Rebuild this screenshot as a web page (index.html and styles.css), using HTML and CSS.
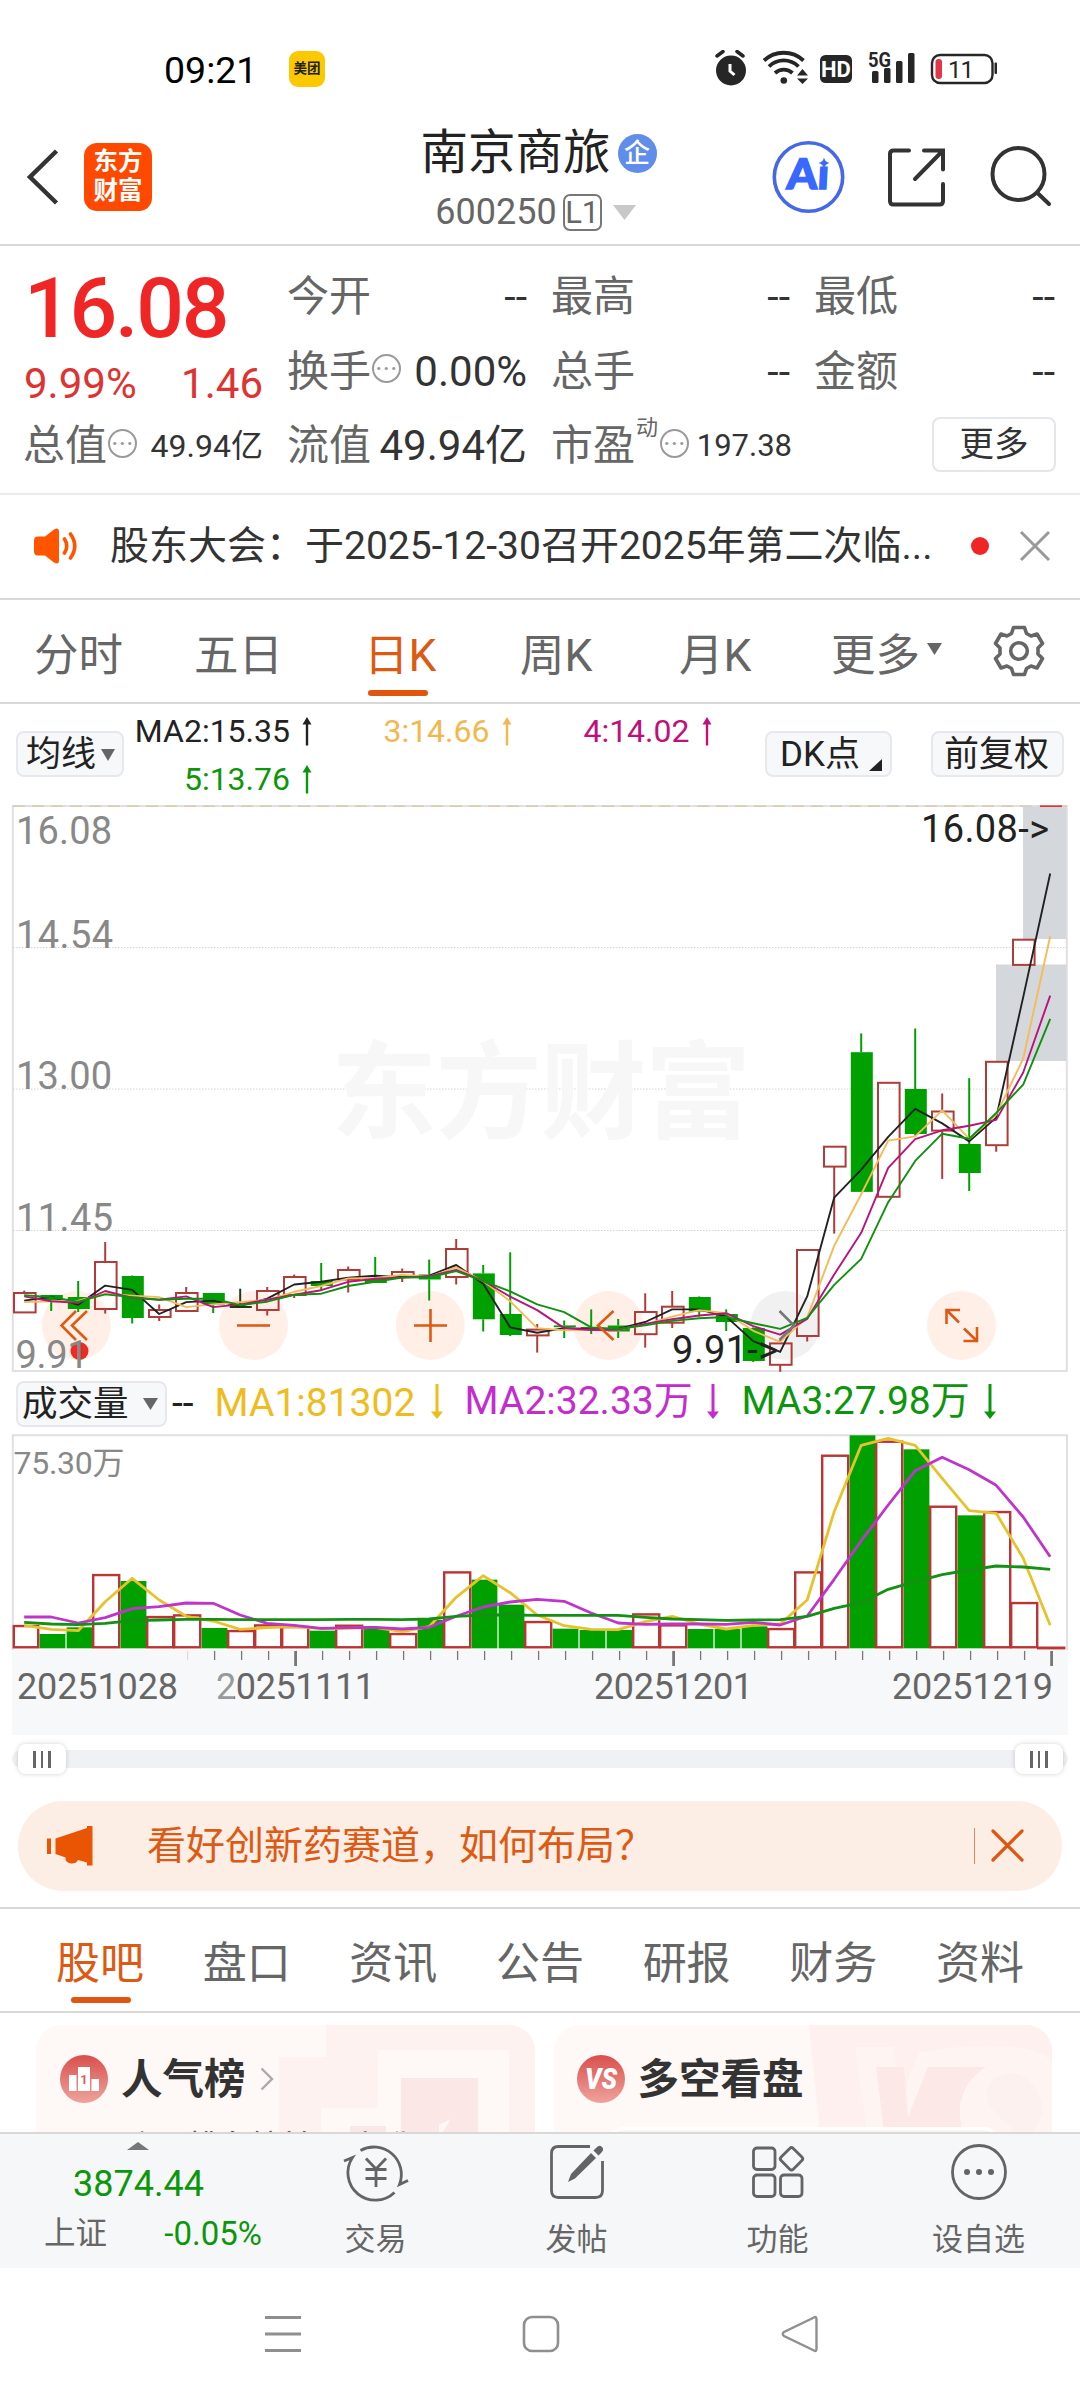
FILE: index.html
```html
<!DOCTYPE html>
<html lang="zh-CN">
<head>
<meta charset="utf-8">
<title>南京商旅 600250</title>
<link rel="stylesheet" href="styles.css">
</head>
<body>
<div class="screen">

  <div class="status">
    <span class="clock">09:21</span>
    <span class="mt">美团</span>
    <svg class="status-icons" width="300" height="40" viewBox="0 0 300 40">
      <g fill="#262626">
        <circle cx="16" cy="20.500" r="15"/>
        <path d="M3 6.500L9 2M29 6.500L23 2" transform="translate(-1,-.5)" stroke="#262626" stroke-width="3.500" stroke-linecap="round"/>
        <path d="M15 14v7l4.500 4" fill="none" stroke="#fff" stroke-width="3"/>
        <g fill="none" stroke="#262626" stroke-width="3.800">
          <path d="M49 10.500a29 29 0 0 1 39.500 0"/>
          <path d="M54 16.500a21 21 0 0 1 29.500 0"/>
          <path d="M60 23a13 13 0 0 1 17.500 0"/>
        </g>
        <circle cx="68.800" cy="30.500" r="3.300"/>
        <path d="M82 25.500l5.500-6.500 5.500 6.500zM82 28.500l5.500 5.500 5.500-5.500z"/>
        <rect x="105" y="5" width="32" height="28" rx="5.500"/>
        <rect x="157" y="21" width="6.500" height="12" rx="1.500"/>
        <rect x="169" y="18" width="6.500" height="15" rx="1.500"/>
        <rect x="181" y="11" width="6.500" height="22" rx="1.500"/>
        <rect x="193" y="3" width="6.500" height="30" rx="1.500"/>
        <rect x="279.500" y="12.500" width="2.500" height="11.500" rx="1"/>
      </g>
      <rect x="217" y="5" width="60.500" height="28" rx="8" fill="none" stroke="#262626" stroke-width="2.400"/>
      <rect x="220.500" y="9" width="6.500" height="20" rx="3" fill="#e4344a"/>
      <text x="121" y="27" class="s-hd">HD</text>
      <text x="153" y="16.500" class="s-5g" textLength="23" lengthAdjust="spacingAndGlyphs">5G</text>
      <text x="233" y="28" class="s-batt" textLength="26">11</text>
    </svg>
  </div>

  <header class="header">
    <svg class="back" width="36" height="60" viewBox="0 0 36 60"><path d="M31.500 4L5 30l26.500 26" fill="none" stroke="#333" stroke-width="4.500"/></svg>
    <div class="logo"><span>东方</span><span>财富</span></div>
    <div class="title">
      <div class="name">南京商旅<span class="badge">企</span></div>
      <div class="code">600250<span class="lv">L1</span><svg width="24" height="15" viewBox="0 0 24 15"><path d="M0 0h23L11.500 15z" fill="#c8c8c8"/></svg></div>
    </div>
    <svg class="head-icons" width="290" height="76" viewBox="0 0 290 76">
      <circle cx="38.500" cy="38" r="34.200" fill="none" stroke="#4468e8" stroke-width="3.600"/>
      <text x="19" y="50.500" class="ai" textLength="42" lengthAdjust="spacingAndGlyphs" transform="skewX(-3)">Aı</text>
      <path d="M54 18.500q1 4.500 5.500 5.500-4.500 1-5.500 5.500-1-4.500-5.500-5.500 4.500-1 5.500-5.500z" fill="#3968ff"/>
      <g fill="none" stroke="#333" stroke-width="4" stroke-linecap="round">
        <path d="M139 11.500h-15.500q-3.500 0-3.500 3.500v47q0 3.500 3.500 3.500h46q3.500 0 3.500-3.500v-17M154 11.500h19v19M173 11.500L145 40"/>
        <circle cx="248.500" cy="35" r="26"/>
        <path d="M267.500 54L279 65"/>
      </g>
    </svg>
  </header>

  <section class="quote">
    <div class="price-box">
      <div class="price">16.08</div>
      <div class="chg"><span>9.99%</span><span>1.46</span></div>
    </div>
    <div class="cell"><span class="k">今开</span><b>--</b></div>
    <div class="cell"><span class="k">最高</span><b>--</b></div>
    <div class="cell"><span class="k">最低</span><b>--</b></div>
    <div class="cell"><span class="k">换手<i class="dots">···</i></span><b class="lg">0.00%</b></div>
    <div class="cell"><span class="k">总手</span><b>--</b></div>
    <div class="cell"><span class="k">金额</span><b>--</b></div>
    <div class="cell"><span class="k">总值<i class="dots">···</i></span><b class="sm">49.94亿</b></div>
    <div class="cell"><span class="k">流值</span><b class="lg">49.94亿</b></div>
    <div class="cell"><span class="k">市盈<sup>动</sup><i class="dots">···</i></span><b class="xs">197.38</b></div>
    <div class="cell end"><span class="more">更多</span></div>
  </section>

  <section class="news">
    <svg width="48" height="40" viewBox="0 0 48 40"><path d="M5 10.500h7L21 3.500q5-3 5 2.500v28q0 5.500-5 2.500L12 29.500H5q-4 0-4-4v-11q0-4 4-4z" fill="#ff5500"/><path d="M31.500 13q4.500 7 0 14M37.500 8q8.500 12 0 24" fill="none" stroke="#ff5500" stroke-width="3.600" stroke-linecap="round"/></svg>
    <span class="news-text">股东大会：于2025-12-30召开2025年第二次临...</span>
    <span class="dot"></span>
    <svg width="32" height="32" viewBox="0 0 32 32"><path d="M2 2l28 28M30 2L2 30" stroke="#999" stroke-width="3"/></svg>
  </section>

  <nav class="periods">
    <span>分时</span><span>五日</span><span class="on">日K</span><span>周K</span><span>月K</span><span>更多<svg width="15" height="12" viewBox="0 0 15 12"><path d="M0 0h15L7.500 12z" fill="#666"/></svg></span>
    <svg class="gear" width="52" height="52" viewBox="-26 -26 52 52"><g fill="none" stroke="#666" stroke-width="3.600" stroke-linejoin="round"><circle r="8.300"/><path d="M-5.500-23.500H5.500L7.500-17.500 12-15 18-17 23.500-7.500 19-3V3L23.500 7.500 18 17 12 15 7.500 17.500 5.500 23.500H-5.500L-7.500 17.500-12 15-18 17-23.500 7.500-19 3V-3L-23.500-7.500-18-17-12-15-7.500-17.500z"/></g></svg>
  </nav>

  <section class="ma">
    <span class="btn b1">均线<svg width="14" height="12" viewBox="0 0 14 12"><path d="M0 0h14L7 12z" fill="#666"/></svg></span>
    <div class="ma-list">
      <span class="m2">MA2:15.35<svg class="up" width="12" height="29"><use href="#up"/></svg></span>
      <span class="m3">3:14.66<svg class="up" width="12" height="29"><use href="#up"/></svg></span>
      <span class="m4">4:14.02<svg class="up" width="12" height="29"><use href="#up"/></svg></span>
      <span class="m5">5:13.76<svg class="up" width="12" height="29"><use href="#up"/></svg></span>
    </div>
    <span class="btn b2">DK点<svg width="13" height="12" viewBox="0 0 13 12"><path d="M13 0v12H0z" fill="#222"/></svg></span>
    <span class="btn b3">前复权</span>
  </section>

  <svg class="kline" id="kline" width="1080" height="575" viewBox="0 0 1080 575">
    <rect x="12.800" y="6" width="1054" height="565" fill="none" stroke="#e0e0e0" stroke-width="2"/>
    <path d="M13 6.200H1067" stroke="#d8c4a4" stroke-width="1.200" stroke-dasharray="12 7"/>
    <path d="M13 147.500H1067M13 289H1067M13 430.500H1067" stroke="#d4d4d4" stroke-width="1" stroke-dasharray="1.500 1.500"/>
    <text class="watermark" x="331" y="330" textLength="420">东方财富</text>
    <g fill="#d4d8dd"><path d="M1023 6.500h43.500V139H1023zM996 164.500h70.500V261H996z"/></g>
    <path d="M1040 6.200h22" stroke="#e03030" stroke-width="1.600"/>
    <g fill="#ffefe7">
      <circle cx="76.400" cy="525.500" r="34.500"/><circle cx="253.500" cy="525.500" r="34.500"/><circle cx="430.400" cy="525.500" r="34.500"/>
      <circle cx="608.500" cy="525.500" r="34.500"/><circle cx="785" cy="525.500" r="34.500" fill="#f1f1f1"/><circle cx="961.500" cy="525.500" r="34.500"/>
    </g>
    <circle cx="79.500" cy="551" r="9" fill="#ee2a22"/>
    <g class="axis">
      <text x="16" y="44" textLength="96">16.08</text><text x="16" y="148" textLength="97">14.54</text>
      <text x="16" y="289" textLength="96">13.00</text><text x="16" y="431" textLength="97">11.45</text>
      <text x="15.500" y="567.500" textLength="73">9.91</text>
    </g>
    <g id="candles"></g>
    <g id="averages"></g>
    <g class="mark"><text x="921" y="41.700" textLength="128">16.08-&gt;</text><text x="672" y="562.500" textLength="106">9.91-&gt;</text></g>
    <g fill="none" stroke="#dc5a14" stroke-width="2.600">
      <path d="M76 511L61.500 525.500 76 540M87 511L72 525.500 87 540M237 525.500h33M414 525.500h33M430.500 509v33M613.500 511L598 525.500 613.500 540"/>
      <path d="M960 510H946.500V524M946.500 510l12.500 12.500M963.500 541h13.500V527M977 541L964 528.500"/>
      <path d="M779.500 511L794 525.500 779.500 540" stroke="#777"/>
    </g>
  </svg>

  <section class="vol-head">
    <span class="btn b4">成交量<svg width="15" height="12" viewBox="0 0 15 12"><path d="M0 0h15L7.500 12z" fill="#666"/></svg></span>
    <span class="dash">--</span>
    <span class="v1">MA1:81302<svg class="dn" width="12" height="35"><use href="#down"/></svg></span>
    <span class="v2">MA2:32.33万<svg class="dn" width="12" height="35"><use href="#down"/></svg></span>
    <span class="v3">MA3:27.98万<svg class="dn" width="12" height="35"><use href="#down"/></svg></span>
  </section>

  <svg class="volume" width="1080" height="304" viewBox="0 0 1080 304">
    <path d="M12.800 217V2.200H1067V217" fill="none" stroke="#e0e0e0" stroke-width="2"/>
    <rect x="12" y="217" width="1056" height="85" fill="#f7f8fa"/>
    <text x="13.500" y="41" class="vmax" textLength="111">75.30万</text>
    <g id="bars"></g>
    <g id="vol-averages"></g>
    <g id="ticks"></g>
    <g class="dates">
      <text x="17" y="265.500" textLength="161">20251028</text><text x="216" y="265.500" textLength="159">20251111</text>
      <text x="594" y="265.500" textLength="159">20251201</text><text x="892" y="265.500" textLength="161">20251219</text>
    </g>
    <rect x="212" y="236" width="22" height="32" fill="#f7f8fa" opacity=".35"/>
  </svg>

  <div class="slider"><div class="track"><span class="thumb"><i></i><i></i><i></i></span><span class="thumb"><i></i><i></i><i></i></span></div></div>

  <div class="promo-wrap">
    <div class="promo">
      <svg width="46" height="40" viewBox="0 0 46 40"><path d="M0 12.500h4V28H0zM8.500 12.500L40 2V0h5.500v39.500H40v-3l-9-2.500q-2 4-7 3.500-6-1-5.500-6L8.500 28z" fill="#ea5504"/></svg>
      <span class="promo-text">看好创新药赛道，如何布局？</span>
      <span class="bar"></span>
      <svg width="34" height="34" viewBox="0 0 34 34"><path d="M2 2l29 29M31 2L2 31" stroke="#e0560f" stroke-width="3.200" stroke-linecap="round"/></svg>
    </div>
  </div>

  <nav class="tabs"><span class="on">股吧</span><span>盘口</span><span>资讯</span><span>公告</span><span>研报</span><span>财务</span><span>资料</span></nav>

  <section class="cards">
    <div class="card">
      <svg class="deco" width="499" height="107" viewBox="0 0 499 107"><path d="M290 0h209v107H473V25H342V83H285V107H243V32h47z" fill="#fdf0ee" opacity=".7"/><path d="M365 53h77v54h-35l8-13-12 6v7h-38zM314 101h36v6h-36z" fill="#fbe7e5"/></svg>
      <svg class="ico" width="48" height="48" viewBox="0 0 48 48"><circle cx="24" cy="24" r="24" fill="url(#red)"/><path d="M9 20h7.500v16H9zM18 12h12v24H18zM31.500 24H39v12h-7.500z" fill="#fff"/><text x="24" y="29" class="one">1</text></svg>
      <span class="card-title">人气榜</span>
      <svg width="14" height="24" viewBox="0 0 14 24"><path d="M1.500 1.500L12 12 1.500 22.500" fill="none" stroke="#aaa" stroke-width="2.400"/></svg>
      <span class="sub">个股排名较前日 上升</span>
    </div>
    <div class="card">
      <svg class="deco" width="499" height="107" viewBox="0 0 499 107"><path d="M256 0H499V107H267z" fill="#fdedeb" opacity=".75"/><path d="M302 22h38l8 50 18-44q64-12 110-4 16 4 23 14v69H314z" fill="#fef5f3"/><path d="M323 42h28l4 50 20-50h58q-22 14-26 38-1 14 3 27H331z" fill="#fce9e7"/><path d="M486 70q-12-24-32-22-20 4-20 22 0 12 14 24 12 8 10 13h22q14-18 6-37z" fill="#fdf1ef"/></svg>
      <svg class="ico" width="48" height="48" viewBox="0 0 48 48"><circle cx="24" cy="24" r="24" fill="url(#red)"/><text x="24" y="34" class="vs" textLength="32" lengthAdjust="spacingAndGlyphs">VS</text></svg>
      <span class="card-title">多空看盘</span>
      <span class="frame"></span>
    </div>
  </section>

  <footer class="bottom">
    <div class="index">
      <svg width="22" height="8" viewBox="0 0 22 8"><path d="M0 8L11 0l11 8z" fill="#777"/></svg>
      <div class="pt">3874.44</div>
      <div class="row"><span>上证</span><b>-0.05%</b></div>
    </div>
    <div class="act">
      <svg width="70" height="62" viewBox="0 0 70 62"><g fill="none" stroke="#646464" stroke-width="2.800"><path d="M19.500 9.500A27.500 27.500 0 0 1 58.500 43.500L67 39.500"/><path d="M53.500 51.500A27.500 27.500 0 0 1 11.500 16.500L3 20"/><path d="M25 17.500l10 10.500L45 17.500M24.500 28.500h21M24.500 37.500h21M35 28V46"/></g></svg>
      <span>交易</span>
    </div>
    <div class="act">
      <svg width="70" height="62" viewBox="0 0 70 62"><path d="M48 5.500H16.500Q9.500 5.500 9.500 12.500V49.500Q9.500 56.500 16.500 56.500H53.500Q60.500 56.500 60.500 49.500V20" fill="none" stroke="#646464" stroke-width="2.800"/><path d="M49 12L54 17 33 37.500 26 41l3-8zM51.500 9.500l3-3q3-3 5.500-.5t-.5 5.500l-3 3z" fill="#646464"/></svg>
      <span>发帖</span>
    </div>
    <div class="act">
      <svg width="70" height="62" viewBox="0 0 70 62"><g fill="none" stroke="#646464" stroke-width="2.800"><rect x="10.500" y="7" width="21.500" height="21.500" rx="3.500"/><rect x="10.500" y="34" width="21.500" height="21.500" rx="3.500"/><rect x="37.500" y="34" width="21.500" height="21.500" rx="3.500"/><rect x="-8.600" y="-8.600" width="17.200" height="17.200" rx="2.500" transform="translate(48.500,17.800) rotate(45)"/></g></svg>
      <span>功能</span>
    </div>
    <div class="act">
      <svg width="70" height="62" viewBox="0 0 70 62"><circle cx="35" cy="31" r="26.500" fill="none" stroke="#646464" stroke-width="2.800"/><g fill="#646464"><circle cx="23" cy="31" r="3"/><circle cx="35" cy="31" r="3"/><circle cx="47" cy="31" r="3"/></g></svg>
      <span>设自选</span>
    </div>
  </footer>

  <div class="sysnav">
    <svg width="36" height="38" viewBox="0 0 36 38"><path d="M0 2.500h36M0 19h36M0 35.500h36" stroke="#8f8f8f" stroke-width="3"/></svg>
    <svg width="38" height="38" viewBox="0 0 38 38"><rect x="2" y="2" width="34" height="34" rx="8" fill="none" stroke="#8f8f8f" stroke-width="2.600"/></svg>
    <svg width="38" height="38" viewBox="0 0 38 38"><path d="M33 2.500Q35.500 1 35.500 4.500V33.500Q35.500 37 33 35.500L3 21Q.5 19 3 17z" fill="none" stroke="#8f8f8f" stroke-width="2.400"/></svg>
  </div>
</div>

<svg class="defs" width="0" height="0">
  <defs>
    <linearGradient id="red" x1="0" y1="0" x2="0" y2="1"><stop offset="0" stop-color="#d8504c"/><stop offset="1" stop-color="#efa29c"/></linearGradient>
    <symbol id="up" viewBox="0 0 12 29" overflow="visible"><path d="M6 4V28.500" stroke="currentColor" stroke-width="2.400"/><path d="M6 0l4.500 7.500h-9z" fill="currentColor"/></symbol>
    <symbol id="down" viewBox="0 0 12 35" overflow="visible"><path d="M6 0V30" stroke="currentColor" stroke-width="3"/><path d="M6 35L0 27.500h12z" fill="currentColor"/></symbol>
  </defs>
</svg>
<script src="chart.js"></script>
</body>
</html>
```
FILE: styles.css
```css
* { box-sizing: border-box; }
body { margin: 0; background: #fff; font-family: Roboto, "Noto Sans CJK SC", sans-serif; color: #333; }
b, i { font-weight: 400; font-style: normal; }
svg { display: block; flex: none; }
span { white-space: nowrap; }
.screen { width: 1080px; height: 2400px; overflow: hidden; display: flex; flex-direction: column; background: #fff; }
.screen > * { flex: none; }
.defs { position: absolute; }

.status { height: 100px; padding: 50px 60px 0 164px; display: flex; align-items: flex-start; }
.clock { width: 125px; font-size: 37.500px; line-height: 40px; color: #000; }
.mt { width: 36px; height: 36px; margin: 1px 0 0 0; border-radius: 9px; background: #fcc800; color: #222; font-size: 13.500px; font-weight: 700; line-height: 35px; text-align: center; flex: none; }
.clock { flex: none; }
.status-icons { margin-left: 390px; }
.s-hd { font-size: 22px; font-weight: 700; fill: #fff; text-anchor: middle; }
.s-5g { font-size: 19.500px; font-weight: 700; fill: #262626; }
.s-batt { font-size: 24px; fill: #262626; }

.header { height: 146px; border-bottom: 2px solid #d8d8d8; display: flex; padding-left: 25px; }
.back { margin: 47px 23px 0 0; }
.logo { width: 68px; height: 68px; margin-top: 43px; border-radius: 13px; background: #ff4800; color: #fff; font-size: 24.500px; font-weight: 700; line-height: 29px; padding-top: 4px; display: flex; flex-direction: column; align-items: center; }
.title { width: 458px; margin-left: 156px; display: flex; flex-direction: column; align-items: center; padding-top: 28px; }
.name { height: 50px; font-size: 47.500px; line-height: 50px; color: #222; display: flex; align-items: center; padding-left: 3px; }
.badge { width: 39px; height: 39px; margin-left: 7px; border-radius: 50%; background: #5f8de9; color: #fff; font-size: 26px; font-weight: 500; line-height: 38px; text-align: center; }
.code { height: 38px; margin-top: 15px; font-size: 36px; line-height: 38px; color: #666; display: flex; align-items: center; padding-right: 2px; }
.lv { width: 39px; height: 37px; margin: 0 11px 0 6px; border: 2px solid #777; border-radius: 7px; font-size: 31px; line-height: 34px; text-align: center; }
.head-icons { margin: 39px 0 0 4px; }
.ai { font-family: Lato, Roboto, sans-serif; font-weight: 900; font-size: 42px; fill: #3968ff; stroke: #3968ff; stroke-width: 1.500px; }

.quote { height: 249px; border-bottom: 2px solid #ebebeb; padding: 14px 24px 0 25px; display: grid; grid-template-columns: 238px 238px 237px 239px; grid-auto-rows: 74.500px; column-gap: 26px; }
.price-box { grid-row: span 2; margin-left: -1px; }
.price { height: 96px; font-size: 84px; line-height: 98px; font-weight: 500; color: #f02626; letter-spacing: -2.200px; }
.chg { display: flex; justify-content: space-between; font-size: 42px; line-height: 55px; color: #dd3333; }
.cell { display: flex; align-items: center; justify-content: space-between; font-size: 41px; line-height: 60px; }
.cell.end { justify-content: flex-end; }
.k { color: #666; display: flex; align-items: center; margin-left: -2px; font-size: 42px; }
.cell .lg { font-size: 42px; }
.cell .sm { font-size: 32px; }
.cell .xs { font-size: 31px; margin-right: -2px; }
.k sup { font-size: 22px; line-height: 22px; margin: -36px 1px 0 1px; }
.dots { width: 29px; height: 29px; margin: -6px 0 0 1px; border: 2px solid #999; border-radius: 50%; font-size: 20px; line-height: 24px; letter-spacing: 1.500px; font-weight: 700; text-align: center; color: #999; padding-left: 1px; }
.more { width: 124px; height: 55px; border: 2px solid #e4e6ea; border-radius: 8px; font-size: 34.500px; line-height: 51px; text-align: center; margin: -4px -1px 0 0; }

.news { height: 105px; border-bottom: 2px solid #d8d8d8; padding: 0 29px 1px 33px; display: flex; align-items: center; }
.news-text { width: 861px; margin-left: 29px; font-size: 39px; line-height: 60px; }
.dot { width: 18px; height: 18px; border-radius: 50%; background: #f02626; margin-right: 30px; }

.periods { height: 104px; border-bottom: 2px solid #d8d8d8; padding: 0 35px 0 34px; display: grid; grid-template-columns: 160px 170px 156px 159px 152px 1fr 52px; align-items: center; font-size: 44.500px; color: #666; }
.periods span { position: relative; display: flex; align-items: center; height: 100px; }
.periods span svg { margin: -4px 0 0 7px; }
.periods .on, .tabs .on { color: #dd5a14; }
.on::after { content: ""; position: absolute; left: 4px; bottom: 5px; width: 60px; height: 6px; border-radius: 3px; background: #e0560f; }

.ma { height: 96px; padding: 0 16px; display: flex; align-items: flex-start; }
.btn { height: 46px; border: 2px solid #e6e8ed; border-radius: 8px; background: #f7f8fa; color: #222; font-size: 35px; line-height: 40px; display: flex; align-items: center; padding: 2px 8px 0; margin-top: 27px; flex: none; }
.btn svg { margin: -1px 0 0 5px; }
.b1 { width: 108px; }
.ma-list { width: 627px; padding-top: 8px; display: grid; grid-template-columns: 189px 199.500px 200px; grid-auto-rows: 48px; font-size: 32px; }
.ma-list span { display: flex; justify-content: flex-end; height: 38px; align-items: center; }
.up { margin: 0 0 0 11px; }
.m2 { color: #222; } .m3 { color: #f2b84e; } .m4 { color: #c0107c; } .m5 { color: #0c960c; }
.b2 { width: 127px; margin-left: 14px; padding: 2px 5px 0 13px; }
.b2 svg { margin: 20px 0 0 9px; }
.b3 { width: 133px; margin-left: 39px; padding: 2px 11px 0; }

.axis { font-size: 38px; fill: #888; }
.mark { font-size: 38px; fill: #222; }
.watermark { font-size: 106px; font-weight: 700; fill: #f7f7f7; }

.vol-head { height: 58px; padding: 0 16px; display: flex; align-items: center; font-size: 39px; }
.vol-head > span { display: flex; align-items: center; }
.vol-head .b4 { width: 151px; margin: -1px 0 0; font-size: 35.500px; padding: 1px 4px 0; }
.b4 svg { margin-left: 14px; }
.dash { margin: -2px 0 0 5px; color: #222; }
.v1, .v2, .v3 { margin-top: -3px; height: 58px; line-height: 56px; }
.v2, .v3 { margin-top: -6px; }
.v1 { color: #eebc1e; margin-left: 21px; width: 250px; }
.v2 { color: #c42cd0; width: 277px; }
.v3 { color: #0c960c; }
.dn { margin: -2px 0 0 16px; }
.v2 .dn, .v3 .dn { margin-left: 14px; margin-top: 1px; }

.vmax { font-size: 32px; fill: #888; }
.dates { font-size: 36px; fill: #666; }

.slider { height: 53px; padding: 13px 12px 0; }
.track { height: 18px; border-radius: 9px; background: #f0f1f4; padding: 0 5px 0 6px; display: flex; justify-content: space-between; align-items: center; }
.thumb { width: 48px; height: 30px; border-radius: 8px; background: #fff; box-shadow: 0 0 5px rgba(0,0,0,.18); display: flex; align-items: center; justify-content: center; gap: 5px; }
.thumb i { width: 2.500px; height: 17px; background: #666; }

.promo-wrap { height: 119px; padding: 11px 18px 0; border-bottom: 2px solid #d8d8d8; }
.promo { height: 90px; border-radius: 45px; background: #fceee5; display: flex; align-items: center; padding: 0 37px 0 29px; color: #dd5a14; }
.promo-text { flex: 1; margin-left: 54px; font-size: 39px; line-height: 60px; }
.bar { width: 1.500px; height: 36px; background: #d98a60; margin-right: 16px; }

.tabs { height: 104px; border-bottom: 2px solid #d8d8d8; padding: 0 56px; display: flex; justify-content: space-between; align-items: center; font-size: 44px; color: #666; }
.tabs span { position: relative; height: 104px; line-height: 112px; }
.tabs .on::after { bottom: 9px; left: 15px; }

.cards { height: 119px; padding: 12px 28px 0 36px; display: flex; gap: 19px; overflow: hidden; }
.card { position: relative; width: 499px; height: 140px; border-radius: 26px 26px 0 0; background: #fef8f6; padding: 30px 0 0 24px; display: flex; align-items: flex-start; overflow: hidden; }
.card:last-child { padding-left: 23px; }
.deco { position: absolute; right: 0; top: 0; }
.ico { position: relative; }
.card > svg:nth-of-type(3) { position: relative; margin: 12px 0 0 14px; }
.card-title { position: relative; margin-left: 13px; font-size: 41.500px; font-weight: 700; line-height: 49px; }
.sub { position: absolute; left: 90px; top: 100px; font-size: 31px; line-height: 44px; color: #555; }
.frame { position: absolute; left: 52px; top: 102px; width: 395px; height: 40px; border: 3px solid #fff; border-radius: 18px; background: #fef4f2; }
.one { font-size: 13px; font-weight: 700; fill: #d8605c; text-anchor: middle; }
.vs { font-size: 29px; font-weight: 900; font-style: italic; fill: #fff; text-anchor: middle; }

.bottom { height: 136px; background: #f6f7f9; border-top: 2px solid #d8d8d8; display: flex; }
.index { width: 275px; display: flex; flex-direction: column; align-items: center; padding-top: 8px; }
.pt { font-size: 36px; line-height: 40px; margin: 14px 0 0 2px; color: #0c960c; }
.row { width: 218px; margin: 8px 0 0 31px; display: flex; justify-content: space-between; align-items: center; font-size: 31.500px; line-height: 44px; color: #666; }
.row b { font-size: 33px; color: #0c960c; }
.act { width: 201px; display: flex; flex-direction: column; align-items: center; font-size: 31px; line-height: 36px; color: #666; padding-top: 7px; }
.act span { margin-top: 19px; }

.sysnav { height: 132px; padding: 0 261px 0 265px; display: flex; justify-content: space-between; align-items: center; }
```
FILE: chart.js
```js
const NS = 'http://www.w3.org/2000/svg';
const RED = '#b03c3a', GREEN = '#00a000';
const STEP = 27, FIRST = 24.2;
const cx = i => FIRST + STEP * i;

function add(parent, tag, attrs) {
  const el = document.createElementNS(NS, tag);
  for (const k in attrs) el.setAttribute(k, attrs[k]);
  document.getElementById(parent).appendChild(el);
}

// [rising?, high, body top, body bottom, low]; 2 marks an unchanged close
const candles = [
  [1,490.6,493,512.4,512.4],[0,495,495,500,511],[0,481,497,509,512],[1,442,462,509,513.6],[0,475.5,476,518,523.5],
  [1,504.5,510,517,521],[1,487,493,511,511],[0,493,493,504.5,513],[2,488.7,506,508,508],[1,487,491,510,515.5],
  [1,474.5,477,495,498],[0,463,481,486,490],[1,466.5,470,479.5,492.5],[0,457,479,483,483],[1,468.5,472,477,482],
  [0,459.6,474.5,479.5,500.5],[1,439,449,477,484.5],[0,465,473.4,519.3,531.5],[0,452.3,514,535,536],[1,524,529.6,535.4,552.6],
  [0,520.5,525.4,527,538],[0,509.4,527,529,534],[0,519,525.5,531.5,538],[1,493.3,512,534.2,547.6],[1,491,506.7,522.7,528],
  [0,496.4,497,511.6,516.6],[0,509.4,514,522,531],[0,527.4,528,561,562],[1,540,543.4,564.8,571.8],[1,450,450,536,541.5],
  [1,346.7,346.7,366.6,433.6],[0,233.4,252.2,391.9,391.9],[1,282.8,282.8,396.8,396.8],[0,228.5,289,334,335.6],[1,293.5,311.5,330.6,378.9],
  [0,278.2,344,373,391],[1,261.8,261.8,345.2,351.7],[1,139.7,139.7,164.9,164.9]
];
candles.forEach(([up, h, t, b, l], i) => {
  const x = cx(i), color = up === 1 ? RED : up ? '#1d3a1d' : GREEN;
  const wick = (a, z) => z > a && add('candles', 'path', { d: `M${x} ${a}V${z}`, stroke: color, 'stroke-width': 2 });
  wick(h, t); wick(b, l);
  add('candles', 'rect', up === 1
    ? { x: x - 10.2, y: t, width: 21.6, height: b - t, fill: 'none', stroke: RED, 'stroke-width': 2 }
    : { x: x - 10.4, y: t, width: 22, height: Math.max(b - t, 1.8), fill: color });
});

function line(parent, values, toY, color, w) {
  const pts = values.map((v, i) => `${cx(i).toFixed(1)},${toY(v).toFixed(1)}`).join(' ');
  add(parent, 'polyline', { points: pts, fill: 'none', stroke: color, 'stroke-width': w, 'stroke-linejoin': 'round' });
}

const K = v => v * 0.3827;
line('averages', [1308,1298,1319,1269,1280,1343,1312,1308,1322,1303,1266,1259,1248,1243,1247,1243,1215,1264,1378,1392,1380,1382,1382,1364,1331,1331,1350,1414,1442,1297,1039,966,880,807,845,892,830,515,192], K, '#222', 1.9);
line('averages', [1312,1310,1308,1290,1295,1299,1325,1318,1312,1306,1285,1270,1250,1249,1241,1246,1221,1257,1310,1380,1386,1384,1384,1370,1350,1333,1341,1387,1416,1352,1165,1030,890,879,811,885,822,676,356], K, '#f4bb58', 1.9);
line('averages', [1297,1310,1314,1283,1301,1306,1297,1325,1318,1306,1293,1281,1259,1251,1248,1244,1228,1256,1298,1333,1380,1385,1384,1369,1357,1347,1341,1375,1397,1356,1240,1131,961,886,863,851,836,712,511], K, '#b8147c', 1.9);
line('averages', [1294,1299,1311,1292,1299,1306,1303,1303,1320,1311,1293,1290,1270,1259,1248,1247,1231,1257,1284,1318,1338,1378,1382,1373,1361,1354,1351,1367,1382,1353,1267,1199,1051,943,872,885,818,744,572], K, '#109010', 1.9);

const V = v => v / 3 - 63;
const tops = [767,792,772,614,633,740,735,774,782,765,770,782,766,777,791,750,606,629,704,755,776,780,780,732,765,777,777,769,776,606,256,196,214,238,409,436,425,698,832];
tops.forEach((t, i) => {
  const rising = i === 38 || (candles[i][0] === 1) || i === 8;
  const x = cx(i) - 12, y = V(t);
  add('bars', 'rect', rising
    ? { x: i ? x : x + 1.6, y: y + 0.4, width: i ? 26 : 24.4, height: Math.max(V(833) - y - 0.8, 0.5), fill: 'none', stroke: '#bc3434', 'stroke-width': 2.4 }
    : { x: x + 0.4, y, width: 25.8, height: V(835) - y, fill: GREEN });
});
line('vol-averages', [766,778,782,695,625,690,739,753,778,773,770,776,775,772,785,770,682,617,668,735,767,778,779,755,739,762,777,766,762,690,425,226,205,226,325,422,430,565,766], V, '#e8c22c', 2.8);
line('vol-averages', [741,741,759,743,716,710,699,700,735,760,766,775,773,772,777,772,739,711,696,688,694,729,759,763,762,762,763,757,765,738,628,512,405,302,262,299,346,441,560], V, '#c034cc', 2.8);
line('vol-averages', [757,762,764,760,752,750,748,748,749,749,749,749,748,748,749,747,739,735,735,736,736,736,736,742,747,749,751,750,749,739,715,698,658,635,614,600,588,591,598], V, '#149014', 2.8);

for (let i = 6; i <= 38; i++) {
  const major = [10, 24, 38].includes(i);
  add('ticks', 'path', { d: `M${cx(i) + 1.4} 218V${major ? 233 : 227}`, stroke: i === 6 ? '#ddd' : '#777', 'stroke-width': major ? 2.8 : 1.3 });
}
```
